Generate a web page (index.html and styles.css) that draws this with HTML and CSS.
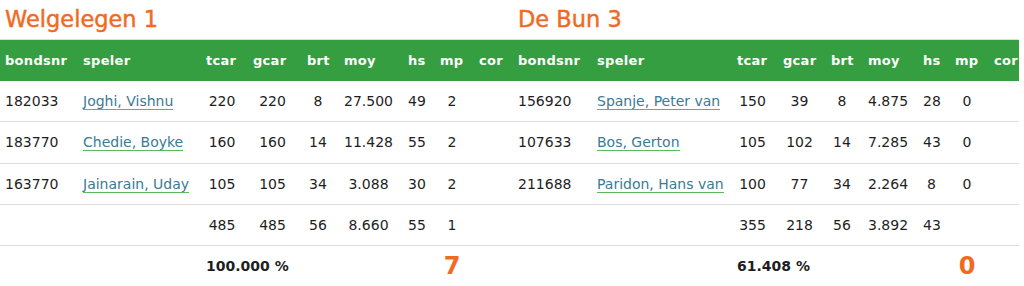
FILE: index.html
```html
<!DOCTYPE html>
<html lang="nl">
<head>
<meta charset="utf-8">
<title>Uitslag</title>
<link rel="stylesheet" href="styles.css">
</head>
<body>
<div class="page">
  <section class="team team-home">
    <h2 class="team-title">Welgelegen 1</h2>
    <table class="score">
      <colgroup>
        <col class="c-nr"><col class="c-name"><col class="c-tcar"><col class="c-gcar"><col class="c-brt"><col class="c-moy"><col class="c-hs"><col class="c-mp"><col class="c-cor">
      </colgroup>
      <thead>
        <tr><th>bondsnr</th><th>speler</th><th>tcar</th><th>gcar</th><th>brt</th><th>moy</th><th>hs</th><th>mp</th><th>cor</th></tr>
      </thead>
      <tbody>
        <tr><td class="txt">182033</td><td class="txt"><a class="player" href="#">Joghi, Vishnu</a></td><td>220</td><td>220</td><td>8</td><td>27.500</td><td>49</td><td>2</td><td></td></tr>
        <tr><td class="txt">183770</td><td class="txt"><a class="player" href="#">Chedie, Boyke</a></td><td>160</td><td>160</td><td>14</td><td>11.428</td><td>55</td><td>2</td><td></td></tr>
        <tr><td class="txt">163770</td><td class="txt"><a class="player" href="#">Jainarain, Uday</a></td><td>105</td><td>105</td><td>34</td><td>3.088</td><td>30</td><td>2</td><td></td></tr>
        <tr><td></td><td></td><td>485</td><td>485</td><td>56</td><td>8.660</td><td>55</td><td>1</td><td></td></tr>
        <tr class="result"><td></td><td></td><td class="txt pct" colspan="4">100.000 %</td><td></td><td class="points">7</td><td></td></tr>
      </tbody>
    </table>
  </section>
  <section class="team team-away">
    <h2 class="team-title">De Bun 3</h2>
    <table class="score">
      <colgroup>
        <col class="c-nr"><col class="c-name"><col class="c-tcar"><col class="c-gcar"><col class="c-brt"><col class="c-moy"><col class="c-hs"><col class="c-mp"><col class="c-cor">
      </colgroup>
      <thead>
        <tr><th>bondsnr</th><th>speler</th><th>tcar</th><th>gcar</th><th>brt</th><th>moy</th><th>hs</th><th>mp</th><th>cor</th></tr>
      </thead>
      <tbody>
        <tr><td class="txt">156920</td><td class="txt"><a class="player" href="#">Spanje, Peter van</a></td><td>150</td><td>39</td><td>8</td><td>4.875</td><td>28</td><td>0</td><td></td></tr>
        <tr><td class="txt">107633</td><td class="txt"><a class="player" href="#">Bos, Gerton</a></td><td>105</td><td>102</td><td>14</td><td>7.285</td><td>43</td><td>0</td><td></td></tr>
        <tr><td class="txt">211688</td><td class="txt"><a class="player" href="#">Paridon, Hans van</a></td><td>100</td><td>77</td><td>34</td><td>2.264</td><td>8</td><td>0</td><td></td></tr>
        <tr><td></td><td></td><td>355</td><td>218</td><td>56</td><td>3.892</td><td>43</td><td></td><td></td></tr>
        <tr class="result"><td></td><td></td><td class="txt pct" colspan="4">61.408 %</td><td></td><td class="points">0</td><td></td></tr>
      </tbody>
    </table>
  </section>
</div>
</body>
</html>
```
FILE: styles.css
```css
html, body {
  margin: 0;
  padding: 0;
  background: #ffffff;
}

body {
  font-family: "DejaVu Sans", Verdana, sans-serif;
  font-size: 14px;
  color: #222222;
}

.page {
  display: flex;
  width: 1019px;
}

.team-home { width: 513px; flex: none; }
.team-away { width: 506px; flex: none; }

.team-title {
  margin: 0;
  padding-left: 5px;
  height: 39px;
  line-height: 39px;
  font-size: 22.5px;
  font-weight: normal;
  color: #f26a1f;
  -webkit-text-stroke: 0.45px #f26a1f;
}

.score {
  width: 100%;
  table-layout: fixed;
  border-collapse: collapse;
  border-top: 1px solid #dddddd;
}

.score th {
  background: #349e41;
  color: #ffffff;
  font-weight: bold;
  font-size: 13px;
  letter-spacing: 0.3px;
  text-align: left;
  padding: 10px 10px 10px 5px;
  line-height: 21px;
  white-space: nowrap;
  overflow: visible;
}

.score td {
  padding: 10px 10px 10px 5px;
  line-height: 20.33px;
  text-align: center;
  border-bottom: 1px solid #dddddd;
  white-space: nowrap;
  color: #1e1e1e;
}

.score td.txt { text-align: left; }

.score tr.result td {
  border-bottom: none;
}

.pct {
  font-weight: bold;
}

.score td.points {
  color: #f26a1f;
  font-weight: bold;
  font-size: 24px;
  line-height: 20px;
}

.player {
  color: #3a7a94;
  text-decoration: none;
  border-bottom: 1px solid #5cb85c;
}

/* column widths, home team */
.team-home .c-nr   { width: 78px; }
.team-home .c-name { width: 123px; }
.team-home .c-tcar { width: 47px; }
.team-home .c-gcar { width: 54px; }
.team-home .c-brt  { width: 37px; }
.team-home .c-moy  { width: 64px; }
.team-home .c-hs   { width: 32px; }
.team-home .c-mp   { width: 39px; }
.team-home .c-cor  { width: 39px; }

/* column widths, away team */
.team-away .c-nr   { width: 79px; }
.team-away .c-name { width: 140px; }
.team-away .c-tcar { width: 46px; }
.team-away .c-gcar { width: 48px; }
.team-away .c-brt  { width: 37px; }
.team-away .c-moy  { width: 55px; }
.team-away .c-hs   { width: 32px; }
.team-away .c-mp   { width: 39px; }
.team-away .c-cor  { width: 30px; }
```
